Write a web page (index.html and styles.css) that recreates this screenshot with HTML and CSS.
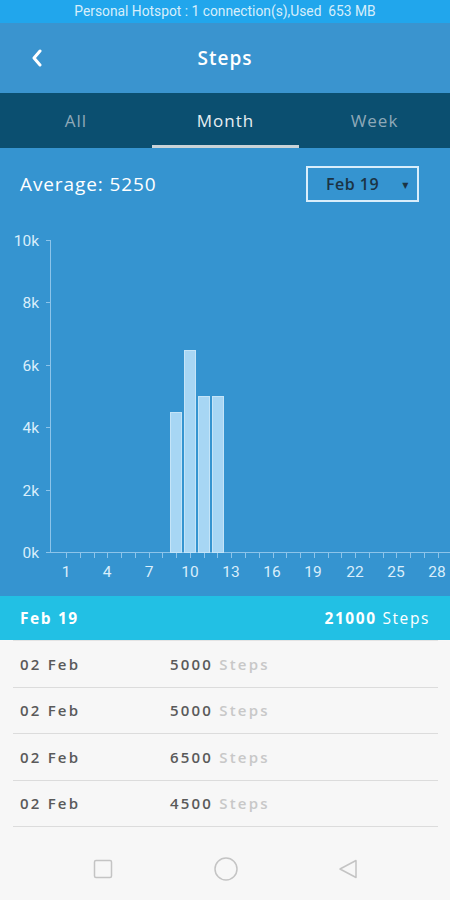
FILE: index.html
```html
<!DOCTYPE html>
<html lang="en">
<head>
    <meta charset="UTF-8">
    <meta name="viewport" content="width=device-width, initial-scale=1.0">
    <title>Steps</title>
    <link rel="stylesheet" href="styles.css">
</head>
<body>
    <div class="status-bar">Personal Hotspot : 1 connection(s),Used&nbsp; 653 MB</div>

    <header class="topbar">
        <span class="back">
            <svg width="14" height="18" viewBox="0 0 14 18"><path d="M10 2 L4 9 L10 16" fill="none" stroke="#fff" stroke-width="3" stroke-linecap="round" stroke-linejoin="round"/></svg>
        </span>
        <h1>Steps</h1>
    </header>

    <nav class="tabs">
        <a class="tab">All</a>
        <a class="tab active">Month</a>
        <a class="tab">Week</a>
    </nav>

    <section class="stats">
        <div class="avg-row">
            <span class="avg">Average: 5250</span>
            <div class="select">
                <span>Feb 19</span>
                <span class="caret">▼</span>
            </div>
        </div>

        <svg class="chart" width="450" height="394" viewBox="0 202 450 394">
            <g class="axis" stroke="#8cc4ea" stroke-width="1">
                <line x1="50.5" y1="240" x2="50.5" y2="552"/>
                <line x1="50" y1="552.5" x2="450" y2="552.5"/>
                <line x1="46" y1="240.5" x2="50" y2="240.5"/>
                <line x1="46" y1="302.5" x2="50" y2="302.5"/>
                <line x1="46" y1="365.5" x2="50" y2="365.5"/>
                <line x1="46" y1="427.5" x2="50" y2="427.5"/>
                <line x1="46" y1="490.5" x2="50" y2="490.5"/>
                <line x1="46" y1="552.5" x2="50" y2="552.5"/>
            </g>
            <g id="xticks" stroke="#8cc4ea" stroke-width="1"></g>
            <g class="ylabels" fill="#d9eefb" font-size="15.5" text-anchor="end">
                <text x="39" y="246">10k</text>
                <text x="39" y="308">8k</text>
                <text x="39" y="371">6k</text>
                <text x="39" y="433">4k</text>
                <text x="39" y="496">2k</text>
                <text x="39" y="558">0k</text>
            </g>
            <g class="xlabels" fill="#d9eefb" font-size="15.5" text-anchor="middle">
                <text x="66" y="577">1</text>
                <text x="107" y="577">4</text>
                <text x="149" y="577">7</text>
                <text x="190" y="577">10</text>
                <text x="231" y="577">13</text>
                <text x="272" y="577">16</text>
                <text x="313" y="577">19</text>
                <text x="355" y="577">22</text>
                <text x="396" y="577">25</text>
                <text x="437" y="577">28</text>
            </g>
            <g class="bars" fill="#a7d6f4" stroke="#c4e4f8" stroke-width="1">
                <rect x="170.5" y="412.5" width="11" height="140"/>
                <rect x="184.5" y="350.5" width="11" height="202"/>
                <rect x="198.5" y="396.5" width="11" height="156"/>
                <rect x="212.5" y="396.5" width="11" height="156"/>
            </g>
        </svg>
    </section>

    <div class="summary">
        <span class="summary-date">Feb 19</span>
        <span><b>21000</b> Steps</span>
    </div>

    <ul class="days">
        <li class="day"><span class="day-date">02 Feb</span><span class="day-val">5000 <em>Steps</em></span></li>
        <li class="day"><span class="day-date">02 Feb</span><span class="day-val">5000 <em>Steps</em></span></li>
        <li class="day"><span class="day-date">02 Feb</span><span class="day-val">6500 <em>Steps</em></span></li>
        <li class="day"><span class="day-date">02 Feb</span><span class="day-val">4500 <em>Steps</em></span></li>
    </ul>

    <footer class="navbar">
        <svg width="22" height="22" viewBox="0 0 22 22"><rect x="2.5" y="2.5" width="17" height="17" rx="1.5" fill="none" stroke="#c4c4c4" stroke-width="1.5"/></svg>
        <svg width="26" height="26" viewBox="0 0 26 26"><circle cx="13" cy="13" r="11" fill="none" stroke="#c4c4c4" stroke-width="1.5"/></svg>
        <svg width="22" height="22" viewBox="0 0 22 22"><path d="M19 2.5 L19 19.5 L3 11 Z" fill="none" stroke="#c4c4c4" stroke-width="1.5" stroke-linejoin="round"/></svg>
    </footer>

    <script>
        // small ticks on the x axis, one per day
        const ticks = document.getElementById('xticks');
        for (let d = 1; d <= 28; d++) {
            const x = Math.round(66 + (d - 1) * 13.77) + 0.5;
            const l = document.createElementNS('http://www.w3.org/2000/svg', 'line');
            l.setAttribute('x1', x);
            l.setAttribute('x2', x);
            l.setAttribute('y1', 553);
            l.setAttribute('y2', 558);
            ticks.appendChild(l);
        }
    </script>
</body>
</html>
```

FILE: styles.css
```css
body {
    margin: 0;
    width: 450px;
    height: 900px;
    overflow: hidden;
    font-family: "Open Sans", "DejaVu Sans", sans-serif;
    background: #f7f7f7;
}
.status-bar {
    height: 23px;
    background: #21a6ec;
    color: #d7eefb;
    font-family: Roboto, sans-serif;
    font-size: 13.8px;
    line-height: 23px;
    text-align: center;
}
.topbar {
    height: 70px;
    background: #3a94cf;
    display: flex;
    align-items: center;
    position: relative;
}
.back {
    display: flex;
    margin-left: 30px;
}
.topbar h1 {
    position: absolute;
    left: 0;
    right: 0;
    margin: 0;
    text-align: center;
    color: #fff;
    font-size: 19px;
    font-weight: 600;
    letter-spacing: 1px;
    pointer-events: none;
}
.tabs {
    height: 55px;
    background: #0b4f70;
    display: grid;
    grid-template-columns: 152px 147px 1fr;
}
.tab {
    display: flex;
    align-items: center;
    justify-content: center;
    color: #8fa9b8;
    font-size: 17px;
    letter-spacing: 1px;
    border-bottom: 3px solid transparent;
    padding-top: 2px;
}
.tab.active {
    color: #e6eef2;
    border-bottom-color: #c9d3d8;
}
.stats {
    background: #3594d0;
    height: 448px;
}
.avg-row {
    display: flex;
    justify-content: space-between;
    align-items: center;
    padding: 18px 31px 0 20px;
}
.avg {
    color: #fff;
    font-size: 19px;
    letter-spacing: 0.9px;
}
.select {
    height: 32px;
    border: 2px solid #d9eefb;
    display: flex;
    align-items: center;
    justify-content: space-between;
    padding: 0 8px 0 18px;
    box-sizing: content-box;
    width: 83px;
    color: #1b3344;
    font-size: 16px;
    font-weight: 600;
    letter-spacing: 0.5px;
}
.caret {
    font-size: 8px;
}
.chart {
    display: block;
    font-family: Roboto, sans-serif;
}
.summary {
    height: 44px;
    background: #22c0e4;
    display: flex;
    justify-content: space-between;
    align-items: center;
    padding: 0 20px;
    color: #fff;
    font-size: 15.5px;
    letter-spacing: 1.6px;
}
.summary-date,
.summary b {
    font-weight: 700;
}
.days {
    list-style: none;
    margin: 0;
    padding: 0 12px 0 13px;
}
.day {
    height: 45.5px;
    border-bottom: 1px solid #dcdcdc;
    display: flex;
    align-items: center;
    padding-left: 7px;
    color: #5a5a5a;
    font-size: 15px;
    font-weight: 600;
    letter-spacing: 2.2px;
}
.day:first-child {
    border-top: 1px solid #e4e4e4;
}
.day-date {
    width: 150px;
}
.day-val em {
    font-style: normal;
    color: #c8c8c8;
}
.navbar {
    display: flex;
    justify-content: space-between;
    align-items: center;
    padding: 29px 91px 0 92px;
}
```
